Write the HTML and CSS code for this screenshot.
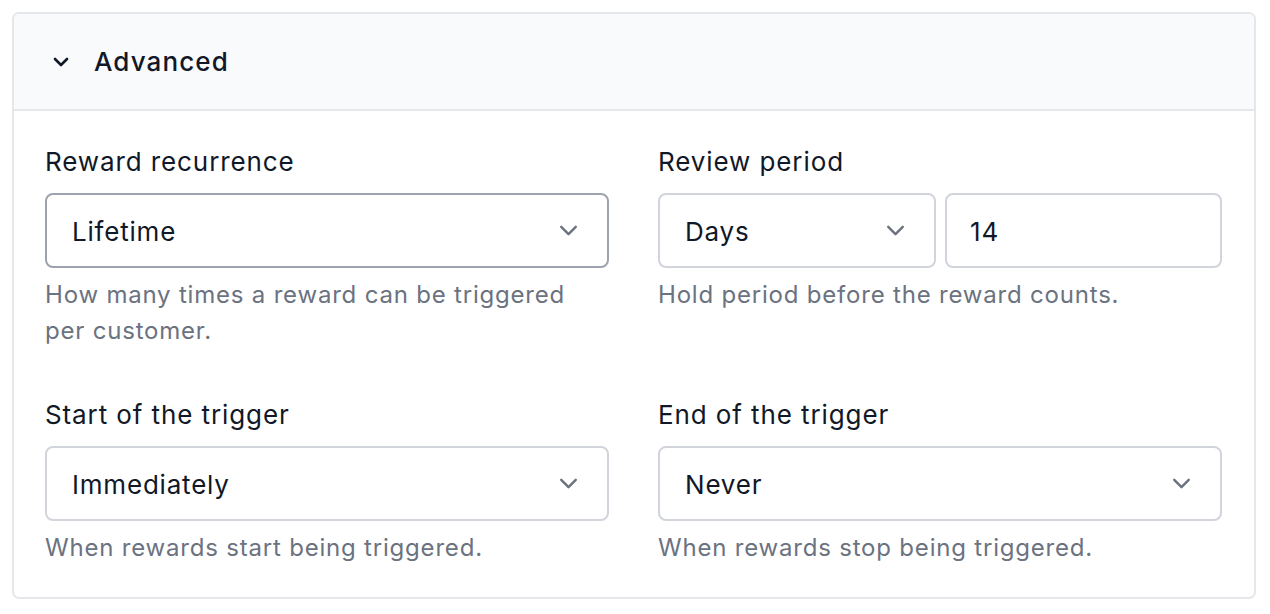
FILE: index.html
```html
<!DOCTYPE html>
<html>
<head>
<meta charset="utf-8">
<link rel="stylesheet" href="styles.css">
</head>
<body>
<div class="card">
  <div class="card-header">
    <svg class="toggle-icon" width="20" height="20" viewBox="0 0 20 20"><path d="M5 7.5 L10 12.5 L15 7.5" fill="none" stroke="#111827" stroke-width="2.2" stroke-linecap="round" stroke-linejoin="round"/></svg>
    <span class="card-title">Advanced</span>
  </div>
  <div class="card-body">
    <div class="field">
      <div class="label">Reward recurrence</div>
      <div class="control select active"><span>Lifetime</span><svg class="chev" width="24" height="24" viewBox="0 0 24 24"><path d="M6 9 L12 15 L18 9" fill="none" stroke="#6b7280" stroke-width="2" stroke-linecap="round" stroke-linejoin="round"/></svg></div>
      <div class="help">How many times a reward can be triggered per customer.</div>
    </div>
    <div class="field">
      <div class="label">Review period</div>
      <div class="pair">
        <div class="control select"><span>Days</span><svg class="chev" width="24" height="24" viewBox="0 0 24 24"><path d="M6 9 L12 15 L18 9" fill="none" stroke="#6b7280" stroke-width="2" stroke-linecap="round" stroke-linejoin="round"/></svg></div>
        <div class="control num"><span>14</span></div>
      </div>
      <div class="help">Hold period before the reward counts.</div>
    </div>
    <div class="field">
      <div class="label">Start of the trigger</div>
      <div class="control select"><span>Immediately</span><svg class="chev" width="24" height="24" viewBox="0 0 24 24"><path d="M6 9 L12 15 L18 9" fill="none" stroke="#6b7280" stroke-width="2" stroke-linecap="round" stroke-linejoin="round"/></svg></div>
      <div class="help">When rewards start being triggered.</div>
    </div>
    <div class="field">
      <div class="label">End of the trigger</div>
      <div class="control select"><span>Never</span><svg class="chev" width="24" height="24" viewBox="0 0 24 24"><path d="M6 9 L12 15 L18 9" fill="none" stroke="#6b7280" stroke-width="2" stroke-linecap="round" stroke-linejoin="round"/></svg></div>
      <div class="help">When rewards stop being triggered.</div>
    </div>
  </div>
</div>
</body>
</html>
```

FILE: styles.css
```css
* { box-sizing: border-box; }
html, body { margin: 0; padding: 0; background: #ffffff; }
body {
  padding: 12px 14px 0 12px;
  font-family: Inter, "Noto Sans", sans-serif;
  color: #111827;
}
.card {
  border: 2px solid #e5e7eb;
  border-radius: 7px;
  overflow: hidden;
  background: #ffffff;
}
.card-header {
  display: flex;
  align-items: center;
  height: 97px;
  padding-left: 35px;
  background: #f9fafb;
  border-bottom: 2px solid #e5e7eb;
}
.toggle-icon { width: 24px; height: 24px; margin-right: 21px; }
.card-title {
  font-size: 26px;
  font-weight: 500;
  letter-spacing: 1.1px;
}
.card-body {
  display: grid;
  grid-template-columns: 1fr 1fr;
  column-gap: 49px;
  row-gap: 48px;
  padding: 33px 32px 31px 31px;
}
.field { display: flex; flex-direction: column; }
.label {
  font-size: 26px;
  line-height: 36px;
  letter-spacing: 0.9px;
  color: #111827;
  margin-bottom: 13px;
}
.control {
  display: flex;
  align-items: center;
  justify-content: space-between;
  height: 75px;
  padding: 2px 24px 0 25px;
  border: 2px solid #d1d5db;
  border-radius: 8px;
  font-size: 26px;
  letter-spacing: 0.8px;
  color: #111827;
  background: #fff;
}
.control.num { padding-left: 23px; }
.control.active { border-color: #9ca3af; }
.chev { width: 29px; height: 29px; margin-top: -2px; }
.pair {
  display: grid;
  grid-template-columns: 278px 1fr;
  column-gap: 9px;
}
.help {
  margin-top: 9px;
  font-size: 24px;
  line-height: 36px;
  color: #6b7280;
  letter-spacing: 0.8px;
  padding-right: 30px;
}
```
